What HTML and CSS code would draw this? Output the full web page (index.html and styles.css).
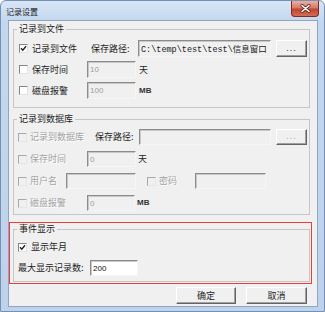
FILE: index.html
```html
<!DOCTYPE html>
<html lang="zh-CN">
<head>
    <meta charset="UTF-8">
    <title>记录设置</title>
    <link rel="stylesheet" href="styles.css">
</head>
<body>

<div class="window">
    <div class="titlebar">
        <span class="title">记录设置</span>
        <span class="close">
            <svg width="11" height="9" viewBox="0 0 11 9">
                <path d="M2 1.5 L9 7.5 M9 1.5 L2 7.5" stroke="#5a2a22" stroke-width="3" stroke-linecap="round"/>
                <path d="M2 1.5 L9 7.5 M9 1.5 L2 7.5" stroke="#fff" stroke-width="1.6" stroke-linecap="round"/>
            </svg>
        </span>
    </div>

    <div class="client">

        <fieldset class="group g-file">
            <legend>记录到文件</legend>
            <div class="rows">
                <div class="row">
                    <span class="cb"><svg width="7" height="7" viewBox="0 0 7 7"><path d="M1 3.2 L2.8 5.2 L6 1.2" fill="none" stroke="#222" stroke-width="1.4"/></svg></span>
                    <span class="lbl w59">记录到文件</span>
                    <span class="lbl w47">保存路径:</span>
                    <span class="edit path w133">C:\temp\test\test\信息窗口</span>
                    <span class="btn dots w31">...</span>
                </div>
                <div class="row">
                    <span class="cb"></span>
                    <span class="lbl w55">保存时间</span>
                    <span class="edit w49">10</span>
                    <span class="unit">天</span>
                </div>
                <div class="row">
                    <span class="cb"></span>
                    <span class="lbl w55">磁盘报警</span>
                    <span class="edit w49">100</span>
                    <span class="unit mb">MB</span>
                </div>
            </div>
        </fieldset>

        <fieldset class="group g-db">
            <legend>记录到数据库</legend>
            <div class="rows">
                <div class="row">
                    <span class="cb off"></span>
                    <span class="lbl w65 dim">记录到数据库</span>
                    <span class="lbl w44">保存路径:</span>
                    <span class="edit w132"></span>
                    <span class="btn dots w31 dim">...</span>
                </div>
                <div class="row">
                    <span class="cb off"></span>
                    <span class="lbl w57 dim">保存时间</span>
                    <span class="edit w49">0</span>
                    <span class="unit">天</span>
                </div>
                <div class="row">
                    <span class="cb off"></span>
                    <span class="lbl w36 dim">用户名</span>
                    <span class="edit w70"></span>
                    <span class="cb off spaced"></span>
                    <span class="lbl w36 dim">密码</span>
                    <span class="edit w71"></span>
                </div>
                <div class="row">
                    <span class="cb off"></span>
                    <span class="lbl w57 dim">磁盘报警</span>
                    <span class="edit w48">0</span>
                    <span class="unit mb">MB</span>
                </div>
            </div>
        </fieldset>

        <div class="alarm">
            <fieldset class="group g-event">
                <legend>事件显示</legend>
                <div class="rows">
                    <div class="row">
                        <span class="cb"><svg width="7" height="7" viewBox="0 0 7 7"><path d="M1 3.2 L2.8 5.2 L6 1.2" fill="none" stroke="#222" stroke-width="1.4"/></svg></span>
                        <span class="lbl">显示年月</span>
                    </div>
                    <div class="row">
                        <span class="lbl w72">最大显示记录数:</span>
                        <span class="edit on w48">200</span>
                    </div>
                </div>
            </fieldset>
        </div>

        <div class="buttons">
            <span class="btn w60">确定</span>
            <span class="btn w61">取消</span>
        </div>

    </div>
</div>

</body>
</html>
```

FILE: styles.css
```css
* {
  margin: 0;
  padding: 0;
  box-sizing: border-box;
}

body {
    width: 325px;
    height: 312px;
    overflow: hidden;
    background-color: #fff;
    font-family: "Noto Sans CJK SC", "Noto Sans", sans-serif;
    font-size: 9px;
    color: #1e1e1e;
}

.window {
    width: 325px;
    height: 312px;
    display: flex;
    flex-direction: column;
    border: 1px solid #7590b4;
    border-radius: 6px 6px 0 0;
    background: linear-gradient(to bottom, #d8e6f6 0, #c3d7ee 20px, #bed3eb 100%);
}

.titlebar {
    height: 19px;
    display: flex;
    align-items: flex-start;
    padding-left: 5px;
}

.title {
    font-size: 8px;
    line-height: 10px;
    margin-top: 6px;
    color: #1b1b1b;
}

.close {
    margin-left: auto;
    margin-right: 5px;
    width: 28px;
    height: 16px;
    border: 1px solid #7c2d22;
    border-top: 0;
    border-radius: 0 0 4px 4px;
    background: linear-gradient(to bottom, #eab0a4, #d7796a 45%, #c2442f 55%, #d56d52);
    display: flex;
    align-items: center;
    justify-content: center;
}

.client {
    flex: 1;
    margin: 0 6px 4px 7px;
    border: 1px solid #8fa6c3;
    background-color: #f0f0f0;
    display: flex;
    flex-direction: column;
}

/* group boxes */
.group {
    border: 1px solid #c6c6c6;
    margin: 2px 7px 0 4px;
    padding: 0 0 8px 0;
    min-width: 0;
}

.group legend {
    margin-left: 3px;
    padding: 0 2px;
    line-height: 12px;
    font-size: 9px;
    color: #1e1e1e;
}

.rows {
    display: flex;
    flex-direction: column;
}

.row {
    display: flex;
    align-items: center;
    height: 16px;
    white-space: nowrap;
}

.g-file .rows {
    padding: 5px 0 0 5px;
    gap: 4px;
}

.g-file .row {
    height: 17px;
}

.g-file .cb {
    margin-right: 4px;
}

.g-db {
    margin-top: 5px;
    padding-bottom: 3px;
}

.g-db .rows {
    padding: 4px 0 0 4px;
    gap: 6px;
}

.alarm {
    margin: 7px 5px 0 0;
    border: 1px solid #ee3b3b;
    padding: 0 1px 1px 3px;
}

.g-event {
    margin: 0;
    padding-bottom: 5px;
}

.g-event .rows {
    padding: 4px 0 0 4px;
    gap: 5px;
}

.g-event .cb {
    margin-right: 4px;
}

/* controls */
.cb {
    flex: none;
    width: 9px;
    height: 9px;
    margin-right: 3px;
    border: 1px solid;
    border-color: #858585 #e2e2e2 #e2e2e2 #858585;
    background-color: #fff;
    display: flex;
    align-items: center;
    justify-content: center;
}

.cb.off {
    background-color: #f0f0f0;
    border-color: #a8a8a8 #e6e6e6 #e6e6e6 #a8a8a8;
}

.cb.spaced {
    margin-left: 11px;
}

.lbl {
    flex: none;
    display: inline-block;
    line-height: 12px;
}

.dim {
    color: #a3a3a3;
    text-shadow: 1px 1px 0 #fff;
}

.edit {
    flex: none;
    height: 100%;
    display: flex;
    align-items: center;
    padding-left: 2px;
    border: 1px solid;
    border-color: #8c8c8c #f6f6f6 #f6f6f6 #8c8c8c;
    box-shadow: inset 1px 1px 0 #c8c8c8;
    background-color: #f0f0f0;
    font-family: "Liberation Sans", Arial, sans-serif;
    font-size: 8px;
    color: #a0a0a0;
}

.edit.on {
    background-color: #fff;
    color: #111;
}

.path {
    font-family: "Liberation Mono", "Noto Sans CJK SC", monospace;
    font-size: 8.5px;
    color: #222;
    overflow: hidden;
}

.unit {
    margin-left: 3px;
    line-height: 12px;
}

.g-db .unit {
    margin-left: 2px;
}

.mb {
    font-family: "Liberation Sans", Arial, sans-serif;
    font-size: 8px;
    font-weight: bold;
    color: #333;
}

.btn {
    flex: none;
    height: 100%;
    display: flex;
    align-items: center;
    justify-content: center;
    background-color: #f0f0f0;
    border: 1px solid;
    border-color: #fff #646464 #646464 #fff;
    box-shadow: inset -1px -1px 0 #a0a0a0;
    line-height: 12px;
}

.dots {
    margin-left: 5px;
    font-family: "Liberation Sans", Arial, sans-serif;
    font-size: 9px;
    letter-spacing: 1px;
    padding-bottom: 2px;
}

.buttons {
    display: flex;
    justify-content: flex-end;
    gap: 10px;
    padding-right: 10px;
    margin-top: 3px;
    height: 17px;
}

/* widths */
.w31 { width: 31px; }
.w36 { width: 36px; }
.w44 { width: 44px; }
.w47 { width: 47px; }
.w48 { width: 48px; }
.w49 { width: 49px; }
.w55 { width: 55px; }
.w57 { width: 57px; }
.w59 { width: 59px; }
.w60 { width: 60px; }
.w61 { width: 61px; }
.w65 { width: 65px; }
.w70 { width: 70px; }
.w71 { width: 71px; }
.w72 { width: 72px; }
.w132 { width: 132px; }
.w133 { width: 133px; }
```
